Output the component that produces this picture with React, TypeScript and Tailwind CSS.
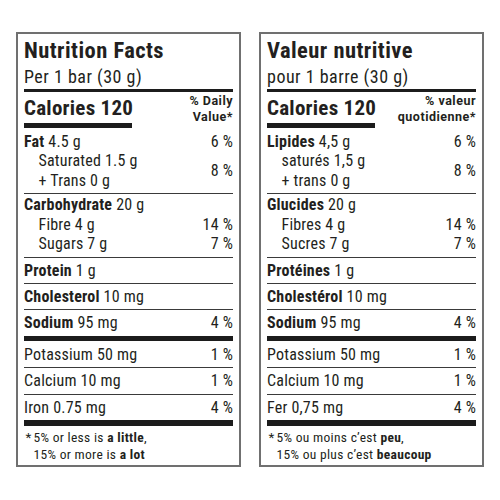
import React from "react";

function Rule({ kind }: { kind: "thin" | "thick" }) {
  return kind === "thin" ? <div className="h-px bg-[#3a3a3a]" /> : <div className="h-[5.5px] bg-[#1c1c1c]" />;
}

function SingleRow({ bold, rest, pct, afterThick }: { bold?: string; rest: string; pct?: string; afterThick?: boolean }) {
  return (
    <div className={`flex justify-between ${afterThick ? "pt-[4.2px]" : "pt-[3px]"} pb-[3px] text-[16px] leading-[19.3px]`}>
      <span>
        {bold && <b className="font-bold">{bold} </b>}
        {rest}
      </span>
      {pct && <span>{pct}</span>}
    </div>
  );
}

type Labels = {
  title: string;
  serving: string;
  dv1: string;
  dv2: string;
  fat: string;
  fatVal: string;
  sat: string;
  trans: string;
  carb: string;
  fibre: string;
  sugars: string;
  protein: string;
  chol: string;
  potassium: string;
  calcium: string;
  iron: string;
  foot1: React.ReactNode;
  foot2: React.ReactNode;
};

function Panel({ l }: { l: Labels }) {
  return (
    <div className="w-[225px] h-[435px] border-2 border-[#707070] px-[6px] flex flex-col text-[#231f20]">
      <div className="pt-[4.3px] text-[22.5px] leading-[24px] font-bold tracking-[0.45px]">{l.title}</div>
      <div className="mt-[4.4px] text-[18px] leading-[20px] tracking-[0.5px]">{l.serving}</div>
      <div className="mt-[2.8px] h-[3px] bg-[#1c1c1c]" />
      <div className="flex justify-between">
        <div className="flex flex-col items-start">
          <div className="mt-[3.8px] text-[21px] leading-[24px] font-bold tracking-[0.25px]">Calories 120</div>
          <div className="mt-[3px] h-[5px] w-[108px] bg-[#1c1c1c]" />
        </div>
        <div className="mt-[1px] text-right text-[12.5px] leading-[15.7px] font-bold [font-stretch:100%] tracking-[0.5px]">
          <div>{l.dv1}</div>
          <div>{l.dv2}</div>
        </div>
      </div>
      {/* Fat section */}
      <div className="pt-[3.8px] pb-[2.7px] text-[16px] leading-[19.3px]">
        <div className="flex justify-between">
          <span>
            <b className="font-bold">{l.fat} </b>
            {l.fatVal}
          </span>
          <span>6 %</span>
        </div>
        <div className="flex justify-between items-center">
          <div className="pl-[14.5px]">
            <div>{l.sat}</div>
            <div>{l.trans}</div>
          </div>
          <span>8 %</span>
        </div>
      </div>
      <Rule kind="thin" />
      {/* Carb section */}
      <div className="pt-[1.7px] pb-[3.8px] text-[16px] leading-[19.15px]">
        <div>
          <b className="font-bold">{l.carb} </b>20 g
        </div>
        <div className="flex justify-between">
          <span className="pl-[14.5px]">{l.fibre}</span>
          <span>14 %</span>
        </div>
        <div className="flex justify-between">
          <span className="pl-[14.5px]">{l.sugars}</span>
          <span>7 %</span>
        </div>
      </div>
      <Rule kind="thin" />
      <SingleRow bold={l.protein} rest="1 g" />
      <Rule kind="thin" />
      <SingleRow bold={l.chol} rest="10 mg" />
      <Rule kind="thin" />
      <SingleRow bold="Sodium" rest="95 mg" pct="4 %" />
      <Rule kind="thick" />
      <SingleRow rest={l.potassium} pct="1 %" afterThick />
      <Rule kind="thin" />
      <SingleRow rest={l.calcium} pct="1 %" />
      <Rule kind="thin" />
      <SingleRow rest={l.iron} pct="4 %" />
      <Rule kind="thick" />
      <div className="pt-[3.5px] text-[13.5px] leading-[16.6px] tracking-[0.3px]">
        <div className="flex">
          <span className="w-[9.5px] pl-[1.5px]">*</span>
          <span>{l.foot1}</span>
        </div>
        <div className="pl-[9.5px]">{l.foot2}</div>
      </div>
    </div>
  );
}

const EN: Labels = {
  title: "Nutrition Facts",
  serving: "Per 1 bar (30 g)",
  dv1: "% Daily",
  dv2: "Value*",
  fat: "Fat",
  fatVal: "4.5 g",
  sat: "Saturated 1.5 g",
  trans: "+ Trans 0 g",
  carb: "Carbohydrate",
  fibre: "Fibre 4 g",
  sugars: "Sugars 7 g",
  protein: "Protein",
  chol: "Cholesterol",
  potassium: "Potassium 50 mg",
  calcium: "Calcium 10 mg",
  iron: "Iron 0.75 mg",
  foot1: (
    <>
      5% or less is <b className="font-bold">a little</b>,
    </>
  ),
  foot2: (
    <>
      15% or more is <b className="font-bold">a lot</b>
    </>
  ),
};

const FR: Labels = {
  title: "Valeur nutritive",
  serving: "pour 1 barre (30 g)",
  dv1: "% valeur",
  dv2: "quotidienne*",
  fat: "Lipides",
  fatVal: "4,5 g",
  sat: "saturés 1,5 g",
  trans: "+ trans 0 g",
  carb: "Glucides",
  fibre: "Fibres 4 g",
  sugars: "Sucres 7 g",
  protein: "Protéines",
  chol: "Cholestérol",
  potassium: "Potassium 50 mg",
  calcium: "Calcium 10 mg",
  iron: "Fer 0,75 mg",
  foot1: (
    <>
      5% ou moins c’est <b className="font-bold">peu</b>,
    </>
  ),
  foot2: (
    <>
      15% ou plus c’est <b className="font-bold">beaucoup</b>
    </>
  ),
};

export default function App() {
  return (
    <div className="w-[500px] h-[500px] bg-white flex gap-[18px] pt-[32px] pl-[16px] [font-family:Roboto,sans-serif] [font-stretch:75%] tracking-[0.2px]">
      <Panel l={EN} />
      <Panel l={FR} />
    </div>
  );
}
